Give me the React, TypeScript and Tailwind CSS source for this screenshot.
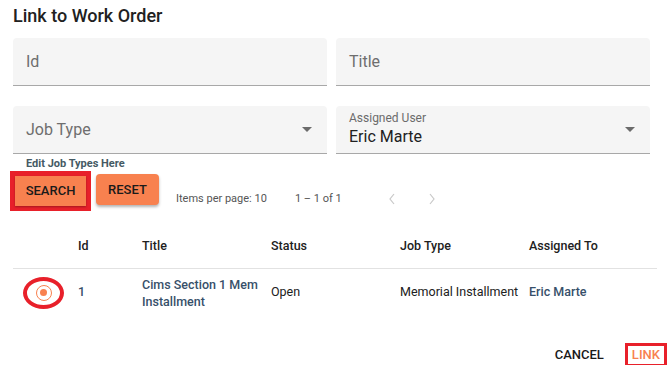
import React from 'react';

const font = { fontFamily: 'Roboto, "Noto Sans", sans-serif' };

function Field({ label, value, select }: { label: string; value?: string; select?: boolean }) {
  return (
    <div className="relative h-[48px] rounded-t-[4px] border-b border-[#a8a8a8] bg-[#f5f5f5] px-[13px]">
      {value ? (
        <div className="pt-[5px]">
          <div className="text-[12px] leading-[14px] text-[#6b6b6b]">{label}</div>
          <div className="mt-[2px] text-[16px] leading-[19px] text-[#212121]">{value}</div>
        </div>
      ) : (
        <div className="pt-[14px] text-[16px] leading-[19px] text-[#6e6e6e]">{label}</div>
      )}
      {select && (
        <div className="absolute right-[15px] top-[21px] h-0 w-0 border-x-[5px] border-t-[5px] border-x-transparent border-t-[#6b6b6b]" />
      )}
    </div>
  );
}

function Chevron({ dir }: { dir: 'left' | 'right' }) {
  return (
    <svg width="8" height="12" viewBox="0 0 8 12" fill="none" stroke="#c8c8c8" strokeWidth="1.2">
      {dir === 'left' ? <path d="M6 1 L2 6 L6 11" /> : <path d="M2 1 L6 6 L2 11" />}
    </svg>
  );
}

const cols = 'grid grid-cols-[65px_64px_129px_129px_129px_1fr]';

export default function App() {
  return (
    <div className="h-[365px] w-[670px] overflow-hidden bg-white text-[#212121]" style={font}>
      <div className="px-[13px] pt-[4px]">
        <h2 className="text-[18px] font-medium leading-[24px] text-[#212121]">Link to Work Order</h2>

        <div className="mt-[10px] grid grid-cols-[314px_314px] gap-x-[9px] gap-y-[20px]">
          <Field label="Id" />
          <Field label="Title" />
          <Field label="Job Type" select />
          <Field label="Assigned User" value="Eric Marte" select />
        </div>

        <div className="mt-[3px] pl-[13px] text-[11px] font-bold leading-[14px] text-[#455a64]">
          Edit Job Types Here
        </div>

        <div className="flex items-start">
          <div className="-ml-[3px] border-[5px] border-[#e8202a]">
            <button
              type="button"
              className="h-[30px] w-[71px] bg-[#f8814f] text-[13px] font-medium text-[#1a1a1a] shadow-[0_1px_2px_rgba(0,0,0,0.3)]"
            >
              SEARCH
            </button>
          </div>
          <button
            type="button"
            className="ml-[5px] mt-[3px] h-[31px] w-[63px] rounded-[4px] bg-[#f8814f] text-[13px] font-medium text-[#1a1a1a] shadow-[0_2px_3px_rgba(0,0,0,0.3)]"
          >
            RESET
          </button>
          <div className="ml-[17px] mt-[20px] flex items-center text-[11px] text-[#555]">
            <span>Items per page: 10</span>
            <span className="ml-[28px]">1 – 1 of 1</span>
            <span className="ml-[46px]">
              <Chevron dir="left" />
            </span>
            <span className="ml-[32px]">
              <Chevron dir="right" />
            </span>
          </div>
        </div>

        <div className={`${cols} mt-[13px] h-[45px] items-center border-b border-[#e2e2e2] text-[12.5px] font-medium text-[#212121]`}>
          <div />
          <div>Id</div>
          <div>Title</div>
          <div>Status</div>
          <div>Job Type</div>
          <div>Assigned To</div>
        </div>

        <div className={`${cols} h-[47px] items-center text-[12.5px] text-[#212121]`}>
          <div className="flex justify-start pl-[10px]">
            <div className="flex h-[32px] w-[41px] items-center justify-center rounded-[50%] border-[4px] border-[#e8202a]">
              <div className="flex h-[16px] w-[16px] items-center justify-center rounded-full border-[1.5px] border-[#f8814f]">
                <div className="h-[7px] w-[7px] rounded-full bg-[#f8814f]" />
              </div>
            </div>
          </div>
          <div className="font-medium text-[#37506a]">1</div>
          <div className="font-medium leading-[17px] text-[#37506a]">
            Cims Section 1 Mem
            <br />
            Installment
          </div>
          <div>Open</div>
          <div>Memorial Installment</div>
          <div className="font-medium text-[#37506a]">Eric Marte</div>
        </div>
      </div>

      <div className="mt-[27px] flex items-center justify-end pr-[3px]">
        <button type="button" className="text-[13px] font-medium text-[#1a1a1a]">
          CANCEL
        </button>
        <div className="ml-[21px] border-[3px] border-[#e8202a] px-[4px] text-[13px] font-medium leading-[18px] text-[#f8814f]">
          LINK
        </div>
      </div>
    </div>
  );
}
